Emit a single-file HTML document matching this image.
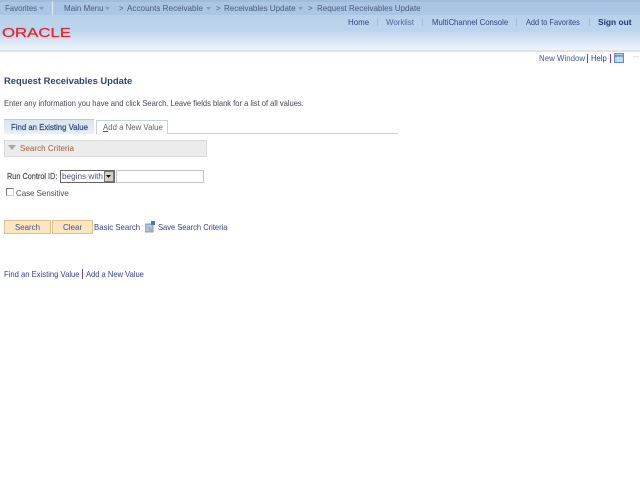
<!DOCTYPE html>
<html><head><meta charset="utf-8"><style>
html,body{margin:0;padding:0;background:#fff;width:640px;height:480px;overflow:hidden}
body{position:relative;font-family:"Liberation Sans",Arial,sans-serif;font-size:8px;color:#3d4a75}
.t{position:absolute;white-space:nowrap;line-height:11px;height:11px;transform-origin:0 50%}
.b{position:absolute}
.nav{color:#4a5a80;font-size:8px}
.lnk{color:#33418a;font-size:8.5px}
</style></head><body>
<div class="b" style="left:0;top:0;width:640px;height:2px;background:#9fbdda"></div>
<div class="b" style="left:0;top:2px;width:640px;height:13px;background:#a9c6e4"></div>
<div class="b" style="left:0;top:15px;width:640px;height:35px;background:linear-gradient(#b8d2ea 0,#bdd5ec 45%,#d5e4f3 70%,#eef4fa 100%)"></div>
<div class="b" style="left:0;top:50px;width:640px;height:2px;background:#e2e2e6"></div>
<div class="b" style="left:52px;top:1px;width:1px;height:14px;background:#e4eef8"></div>

<div class="t nav" style="left:5px;top:3px;font-size:7.8px">Favorites</div>
<svg class="b" style="left:39px;top:7px" width="6" height="3"><path d="M0 0H5L2.5 3Z" fill="#7d9cbc"/></svg>
<div class="t nav" style="left:64px;top:3px">Main Menu</div>
<svg class="b" style="left:105px;top:7px" width="6" height="3"><path d="M0 0H5L2.5 3Z" fill="#7d9cbc"/></svg>
<div class="t nav" style="left:119px;top:3px">&gt;</div>
<div class="t nav" style="left:127px;top:3px;font-size:8.15px">Accounts Receivable</div>
<svg class="b" style="left:206px;top:7px" width="6" height="3"><path d="M0 0H5L2.5 3Z" fill="#7d9cbc"/></svg>
<div class="t nav" style="left:216px;top:3px">&gt;</div>
<div class="t nav" style="left:224px;top:3px">Receivables Update</div>
<svg class="b" style="left:298px;top:7px" width="6" height="3"><path d="M0 0H5L2.5 3Z" fill="#7d9cbc"/></svg>
<div class="t nav" style="left:308px;top:3px">&gt;</div>
<div class="t nav" style="left:317px;top:3px">Request Receivables Update</div>

<div class="t lnk" style="left:348px;top:17px;transform:scaleX(.93)">Home</div>
<div class="b" style="left:377px;top:18px;width:1px;height:8px;background:#a3bcd2"></div>
<div class="t lnk" style="left:386px;top:17px;color:#56639a;transform:scaleX(.93)">Worklist</div>
<div class="b" style="left:422px;top:18px;width:1px;height:8px;background:#a3bcd2"></div>
<div class="t lnk" style="left:432px;top:17px;transform:scaleX(.916)">MultiChannel Console</div>
<div class="b" style="left:516px;top:18px;width:1px;height:8px;background:#a3bcd2"></div>
<div class="t lnk" style="left:526px;top:17px;transform:scaleX(.87)">Add to Favorites</div>
<div class="b" style="left:589px;top:18px;width:1px;height:8px;background:#a3bcd2"></div>
<div class="t" style="left:598px;top:17px;font-weight:bold;color:#1f3a70;font-size:8.4px">Sign out</div>

<svg class="b" style="left:0;top:24px" width="80" height="18"><text x="2" y="13" font-family="Liberation Sans" font-size="12.5" fill="#e8252d" stroke="#e8252d" stroke-width=".25" textLength="69" lengthAdjust="spacingAndGlyphs">ORACLE</text></svg>

<div class="t lnk" style="left:539px;top:53px;color:#4a5a85;transform:scaleX(.93)">New Window</div>
<div class="b" style="left:587px;top:54px;width:1px;height:9px;background:#7a3fa0"></div>
<div class="t lnk" style="left:591px;top:53px;transform:scaleX(.9)">Help</div>
<div class="b" style="left:610px;top:54px;width:1px;height:9px;background:#7a3fa0"></div>
<svg class="b" style="left:614px;top:53px" width="10" height="10"><rect x=".5" y=".5" width="9" height="9" fill="#b9d0ea" stroke="#5f8fc4"/><path d="M1 3H9" stroke="#4f82bd" stroke-width="1.5"/><path d="M4 3V9M7 3V9" stroke="#ffffff" stroke-width=".6"/></svg>
<div class="b" style="left:633px;top:56px;width:6px;height:1px;background:#e4e4e4"></div>

<div class="t" style="left:4px;top:75px;font-weight:bold;font-size:9.4px;color:#2e4470">Request Receivables Update</div>
<div class="t" style="left:4px;top:98px;font-size:8.5px;color:#44444f;transform:scaleX(.89)">Enter any information you have and click Search. Leave fields blank for a list of all values.</div>

<div class="b" style="left:168px;top:133px;width:230px;height:1px;background:#c4d4e4"></div>
<div class="b" style="left:4px;top:119px;width:90px;height:15px;background:linear-gradient(#d6e5f3,#e8f0f8);border-top:1px solid #b4c9de;box-sizing:border-box"></div>
<div class="t" style="left:11px;top:122px;color:#2e4470;font-size:8.5px;-webkit-text-stroke:.2px #2e4470;transform:scaleX(.917)">Find an Existing Value</div>
<div class="b" style="left:96px;top:120px;width:72px;height:14px;background:#fff;border:1px solid #c2d2e2;border-bottom:0;box-sizing:border-box"></div>
<div class="t" style="left:103px;top:122px;color:#5a5f70;font-size:8.5px;transform:scaleX(.92)"><u>A</u>dd a New Value</div>

<div class="b" style="left:4px;top:140px;width:203px;height:17px;background:#ececec;border:1px solid #dadada;box-sizing:border-box"></div>
<svg class="b" style="left:8px;top:145px" width="9" height="6"><path d="M0 0H8L4 5Z" fill="#a8a8a8"/></svg>
<div class="t" style="left:20px;top:143px;color:#a05a3a;font-size:8.1px">Search Criteria</div>

<div class="t" style="left:7px;top:171px;color:#4a4a52;font-size:8.5px;-webkit-text-stroke:.2px #4a4a52;transform:scaleX(.86)">Run Control ID:</div>
<div class="b" style="left:60px;top:170px;width:55px;height:13px;border:1px solid #666;box-sizing:border-box;background:#fff"></div>
<div class="t" style="left:62px;top:171px;color:#4a5080;font-size:8.2px">begins with</div>
<div class="b" style="left:104px;top:171px;width:10px;height:11px;background:#d4d0c8;border:1px solid #777;box-sizing:border-box"></div>
<svg class="b" style="left:106px;top:175px" width="6" height="3"><path d="M0 0H5L2.5 3Z" fill="#111"/></svg>
<div class="b" style="left:116px;top:170px;width:88px;height:13px;border:1px solid #c4c4c4;box-sizing:border-box;background:#fff"></div>

<div class="b" style="left:6px;top:188px;width:8px;height:8px;border:1px solid #777;box-sizing:border-box;background:#fff;border-right-color:#ccc;border-bottom-color:#ccc"></div>
<div class="t" style="left:16px;top:188px;color:#4a4a52;font-size:8.5px;transform:scaleX(.93)">Case Sensitive</div>

<div class="b" style="left:4px;top:220px;width:47px;height:14px;background:#fbe6c4;border:1px solid #e3bd8c;box-sizing:border-box"></div>
<div class="t" style="left:15px;top:222px;color:#4a5270;font-size:7.9px">Search</div>
<div class="b" style="left:52px;top:220px;width:41px;height:14px;background:#fbe6c4;border:1px solid #e3bd8c;box-sizing:border-box"></div>
<div class="t" style="left:63px;top:222px;color:#4a5270;font-size:8px">Clear</div>
<div class="t lnk" style="left:94px;top:222px;transform:scaleX(.92)">Basic Search</div>
<svg class="b" style="left:145px;top:221px" width="11" height="12"><rect x="0" y="3" width="8" height="8" fill="#a9c4e6" stroke="#6a8cc0" stroke-width=".8"/><rect x="6" y="0" width="4" height="4" fill="#4a78c0"/><path d="M3 6l5 5" stroke="#c9a040" stroke-width="1.3"/></svg>
<div class="t lnk" style="left:158px;top:222px;transform:scaleX(.886)">Save Search Criteria</div>

<div class="t lnk" style="left:4px;top:269px;transform:scaleX(.9)">Find an Existing Value</div>
<div class="b" style="left:82px;top:269px;width:1px;height:10px;background:#7a3fa0"></div>
<div class="t lnk" style="left:86px;top:269px;transform:scaleX(.89)">Add a New Value</div>
</body></html>
